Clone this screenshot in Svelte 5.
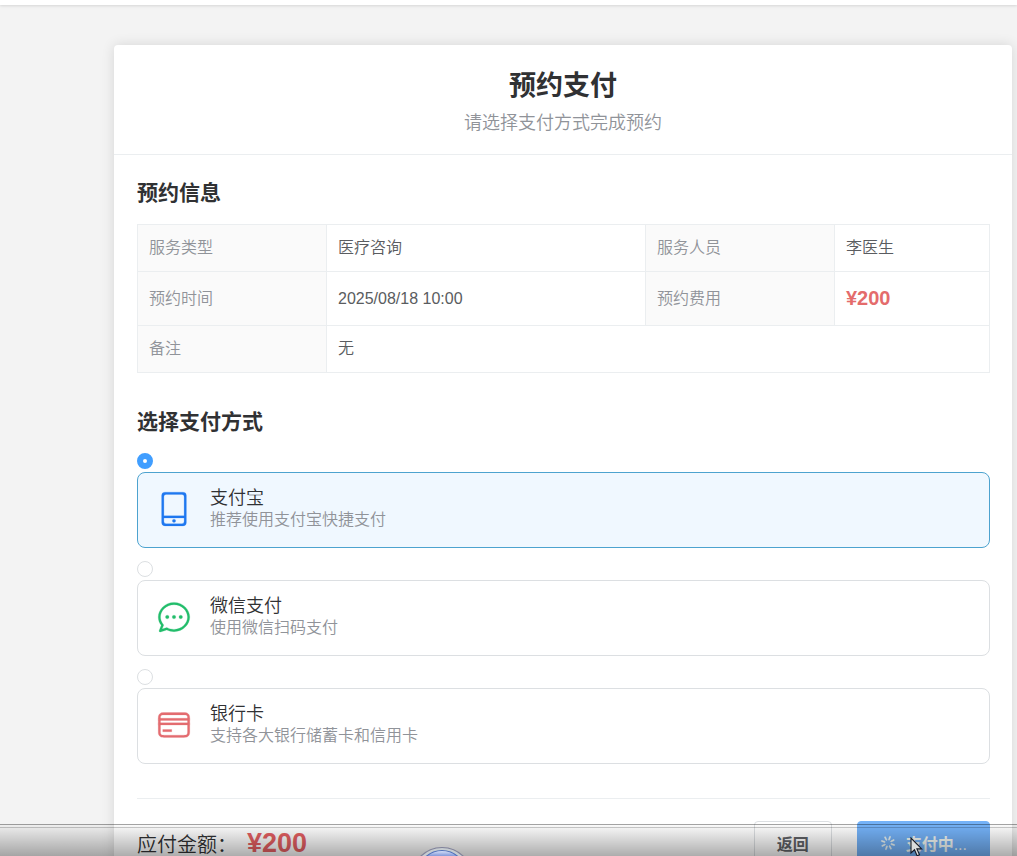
<script>
  let selected = $state('alipay');

  const methods = [
    {
      id: 'alipay',
      name: '支付宝',
      desc: '推荐使用支付宝快捷支付',
      color: '#1f78f0',
      path: 'M224 768v96.064a64 64 0 0 0 64 64h448a64 64 0 0 0 64-64V768zm0-64h576V160a64 64 0 0 0-64-64H288a64 64 0 0 0-64 64zm32 288a96 96 0 0 1-96-96V128a96 96 0 0 1 96-96h512a96 96 0 0 1 96 96v768a96 96 0 0 1-96 96zm304-144a48 48 0 1 1-96 0 48 48 0 0 1 96 0'
    },
    {
      id: 'wechat',
      name: '微信支付',
      desc: '使用微信扫码支付',
      color: '#22bd6b',
      path: 'm174.72 855.68 135.296-45.12 23.68 11.84C388.096 849.536 448.576 864 512 864c211.84 0 384-166.784 384-352S723.84 160 512 160 128 326.784 128 512c0 69.12 24.96 139.264 70.848 199.232l22.08 28.8-46.272 115.584zm-45.248 82.56A32 32 0 0 1 89.6 896l58.368-145.92C94.72 680.32 64 596.864 64 512 64 299.904 256 96 512 96s448 203.904 448 416-192 416-448 416a461.056 461.056 0 0 1-206.912-48.384l-175.616 58.56zM512 563.2a51.2 51.2 0 1 1 0-102.4 51.2 51.2 0 0 1 0 102.4m192 0a51.2 51.2 0 1 1 0-102.4 51.2 51.2 0 0 1 0 102.4m-384 0a51.2 51.2 0 1 1 0-102.4 51.2 51.2 0 0 1 0 102.4'
    },
    {
      id: 'card',
      name: '银行卡',
      desc: '支持各大银行储蓄卡和信用卡',
      color: '#e46c70',
      path: 'M896 324.096c0-42.368-2.496-55.296-9.536-68.48a52.352 52.352 0 0 0-22.144-22.08c-13.12-7.04-26.048-9.536-68.416-9.536H228.096c-42.368 0-55.296 2.496-68.48 9.536a52.352 52.352 0 0 0-22.08 22.144c-7.04 13.12-9.536 26.048-9.536 68.416v375.808c0 42.368 2.496 55.296 9.536 68.48a52.352 52.352 0 0 0 22.144 22.08c13.12 7.04 26.048 9.536 68.416 9.536h567.808c42.368 0 55.296-2.496 68.48-9.536a52.352 52.352 0 0 0 22.08-22.144c7.04-13.12 9.536-26.048 9.536-68.416zm64 0v375.808c0 57.088-5.952 77.76-17.088 98.56-11.136 20.928-27.52 37.312-48.384 48.448-20.864 11.136-41.6 17.088-98.56 17.088H228.032c-57.088 0-77.76-5.952-98.56-17.088a116.288 116.288 0 0 1-48.448-48.384c-11.136-20.864-17.088-41.6-17.088-98.56V324.032c0-57.088 5.952-77.76 17.088-98.56 11.136-20.928 27.52-37.312 48.384-48.448 20.864-11.136 41.6-17.088 98.56-17.088H795.84c57.088 0 77.76 5.952 98.56 17.088 20.928 11.136 37.312 27.52 48.448 48.384 11.136 20.864 17.088 41.6 17.088 98.56zM64 320h896v64H64zm0 128h896v64H64zm128 192h256v64H192z'
    }
  ];
</script>

<div class="page">
  <div class="topbar"></div>

  <main class="card">
    <header class="card-header">
      <h1>预约支付</h1>
      <p>请选择支付方式完成预约</p>
    </header>

    <div class="card-body">
      <section>
        <h2>预约信息</h2>
        <table>
          <colgroup>
            <col class="label-col" />
            <col />
            <col class="label-col" />
            <col class="short-col" />
          </colgroup>
          <tbody>
            <tr>
              <th scope="row">服务类型</th>
              <td>医疗咨询</td>
              <th scope="row">服务人员</th>
              <td>李医生</td>
            </tr>
            <tr class="tall">
              <th scope="row">预约时间</th>
              <td>2025/08/18 10:00</td>
              <th scope="row">预约费用</th>
              <td><strong class="price">¥200</strong></td>
            </tr>
            <tr>
              <th scope="row">备注</th>
              <td colspan="3">无</td>
            </tr>
          </tbody>
        </table>
      </section>

      <section class="methods">
        <h2>选择支付方式</h2>
        <div class="method-list">
          {#each methods as m (m.id)}
            <div class="method">
              <input type="radio" name="method" id={m.id} value={m.id} bind:group={selected} />
              <label class="option" for={m.id} class:active={selected === m.id}>
                <svg class="icon" viewBox="0 0 1024 1024" fill={m.color} stroke={m.color} aria-hidden="true">
                  <path d={m.path} />
                </svg>
                <span class="copy">
                  <span class="name">{m.name}</span>
                  <span class="desc">{m.desc}</span>
                </span>
              </label>
            </div>
          {/each}
        </div>
      </section>

      <footer>
        <div class="total">
          <span>应付金额：</span>
          <strong>¥200</strong>
        </div>
        <div class="actions">
          <button type="button" class="back">返回</button>
          <button type="button" class="pay">
            <svg class="spinner" viewBox="0 0 1024 1024" fill="currentColor" stroke="currentColor" aria-hidden="true">
              <path transform="rotate(18 512 512)" d="M512 64a32 32 0 0 1 32 32v192a32 32 0 0 1-64 0V96a32 32 0 0 1 32-32m0 640a32 32 0 0 1 32 32v192a32 32 0 1 1-64 0V736a32 32 0 0 1 32-32m448-192a32 32 0 0 1-32 32H736a32 32 0 1 1 0-64h192a32 32 0 0 1 32 32m-640 0a32 32 0 0 1-32 32H96a32 32 0 0 1 0-64h192a32 32 0 0 1 32 32M195.2 195.2a32 32 0 0 1 45.248 0L376.32 331.008a32 32 0 0 1-45.248 45.248L195.2 240.448a32 32 0 0 1 0-45.248m452.544 452.544a32 32 0 0 1 45.248 0L828.8 783.552a32 32 0 0 1-45.248 45.248L647.744 692.992a32 32 0 0 1 0-45.248M828.8 195.264a32 32 0 0 1 0 45.184L692.992 376.32a32 32 0 0 1-45.248-45.248l135.808-135.808a32 32 0 0 1 45.248 0m-452.544 452.48a32 32 0 0 1 0 45.248L240.448 828.8a32 32 0 0 1-45.248-45.248l135.808-135.808a32 32 0 0 1 45.248 0" />
            </svg>
            <span>支付中<span class="dots">...</span></span>
          </button>
        </div>
      </footer>
    </div>
  </main>

  <div class="player">
    <svg class="knob" viewBox="0 0 64 10" aria-hidden="true">
      <defs>
        <linearGradient id="knob-fill" x1="0" y1="0" x2="0" y2="1">
          <stop offset="0" stop-color="#dfe7fb" />
          <stop offset="0.1" stop-color="#8aa0dc" />
          <stop offset="1" stop-color="#5570c0" />
        </linearGradient>
      </defs>
      <circle cx="32" cy="31.5" r="30" fill="#c6ccd0" stroke="#80829a" stroke-width="1.2" />
      <circle cx="32" cy="28.5" r="24" fill="url(#knob-fill)" stroke="#4e6fb8" stroke-width="1.2" />
    </svg>
  </div>

  <svg class="cursor" viewBox="0 0 13 20" aria-hidden="true">
    <path d="M1 1v15l3.5-3.2 2.6 6 2.4-1-2.6-5.9h4.8z" fill="#dcdcdc" stroke="#161a26" stroke-width="1.1" />
  </svg>
</div>

<style>
  :global(body) {
    margin: 0;
  }

  .page {
    position: relative;
    box-sizing: border-box;
    height: 100vh;
    overflow: hidden;
    background: #f3f3f3;
    color: #303133;
    font-family: "Liberation Sans", "Noto Sans CJK SC", sans-serif;
    font-size: 16px;
    font-weight: 350;
  }

  .topbar {
    height: 5px;
    background: #fff;
    box-shadow: 0 1px 3px rgba(0, 0, 0, 0.12);
  }

  .card {
    margin: 40px 5px 0 114px;
    background: #fff;
    border-radius: 4px;
    box-shadow: 0 0 13px rgba(0, 0, 0, 0.12);
  }

  .card-header {
    padding: 21px 24px 18px;
    border-bottom: 1px solid #ebeef0;
    text-align: center;
  }

  h1 {
    margin: 0;
    font-size: 27px;
    line-height: 40px;
  }

  .card-header p {
    margin: 5px 0 0;
    color: #909399;
    font-size: 18px;
    line-height: 25px;
  }

  .card-body {
    padding: 22px 22px 24px 23px;
  }

  h2 {
    margin: 0 0 16px;
    font-size: 21px;
    line-height: 31px;
  }

  table {
    width: 100%;
    table-layout: fixed;
    border-collapse: collapse;
  }

  .label-col {
    width: 189px;
  }

  .short-col {
    width: 155px;
  }

  tr {
    height: 47px;
  }

  tr.tall {
    height: 54px;
  }

  th,
  td {
    padding: 0 11px;
    border: 1px solid #ebeef0;
    font-weight: inherit;
    line-height: 24px;
    text-align: left;
    vertical-align: middle;
  }

  th {
    background: #fafafa;
    color: #909399;
  }

  td {
    color: #5a5c60;
  }

  strong {
    font-weight: 700;
  }

  .price {
    color: #e46c6c;
    font-size: 20px;
  }

  .methods {
    margin-top: 33px;
  }

  .method-list {
    display: grid;
    gap: 13px;
  }

  .method {
    display: grid;
    gap: 3px;
  }

  input[type='radio'] {
    appearance: none;
    box-sizing: border-box;
    width: 16px;
    height: 16px;
    margin: 0;
    border: 1px solid #dcdfe2;
    border-radius: 50%;
    background: #fff;
  }

  input[type='radio']:checked {
    border: 6px solid #409eff;
  }

  .option {
    display: flex;
    align-items: center;
    gap: 18px;
    box-sizing: border-box;
    height: 76px;
    padding: 0 18px 2px;
    border: 1px solid #dcdfe2;
    border-radius: 8px;
    cursor: pointer;
  }

  .option.active {
    border-color: #4da3cf;
    background: #f0f8ff;
  }

  .icon {
    width: 36px;
    height: 36px;
    stroke-width: 6;
  }

  .copy {
    display: grid;
    line-height: 22px;
  }

  .name {
    font-size: 18px;
  }

  .desc {
    color: #909399;
  }

  footer {
    display: flex;
    align-items: center;
    justify-content: space-between;
    margin-top: 34px;
    padding-top: 22px;
    border-top: 1px solid #ebeef0;
  }

  .total {
    display: flex;
    align-items: center;
    gap: 10px;
    font-size: 20px;
  }

  .total strong {
    color: #e45f62;
    font-size: 27px;
  }

  .actions {
    display: flex;
    gap: 25px;
  }

  button {
    display: flex;
    align-items: center;
    gap: 10px;
    height: 44px;
    padding: 0 22px;
    border: 1px solid #dcdfe2;
    border-radius: 4px;
    background: #fff;
    color: #606266;
    font-family: inherit;
    font-size: 16px;
    font-weight: 600;
  }

  .pay {
    border-color: #74b2f8;
    background: #74b2f8;
    color: #f4faf6;
  }

  .dots {
    font-weight: 400;
  }

  .spinner {
    width: 16px;
    height: 16px;
    stroke-width: 36;
  }

  .player {
    position: absolute;
    right: 0;
    bottom: 0;
    left: 0;
    box-sizing: border-box;
    height: 32px;
    border-top: 1px solid rgba(0, 0, 0, 0.36);
    background:
      linear-gradient(rgba(0, 0, 0, 0.2), rgba(0, 0, 0, 0.2)) 0 2px / 100% 1px no-repeat,
      linear-gradient(rgba(0, 0, 0, 0.02), rgba(0, 0, 0, 0.32));
    background-clip: padding-box;
  }

  .knob {
    position: absolute;
    bottom: 0;
    left: calc(43.5% - 32px);
    width: 64px;
    height: 10px;
  }

  .cursor {
    position: absolute;
    top: 837px;
    left: 910px;
    width: 13px;
    height: 20px;
  }
</style>
